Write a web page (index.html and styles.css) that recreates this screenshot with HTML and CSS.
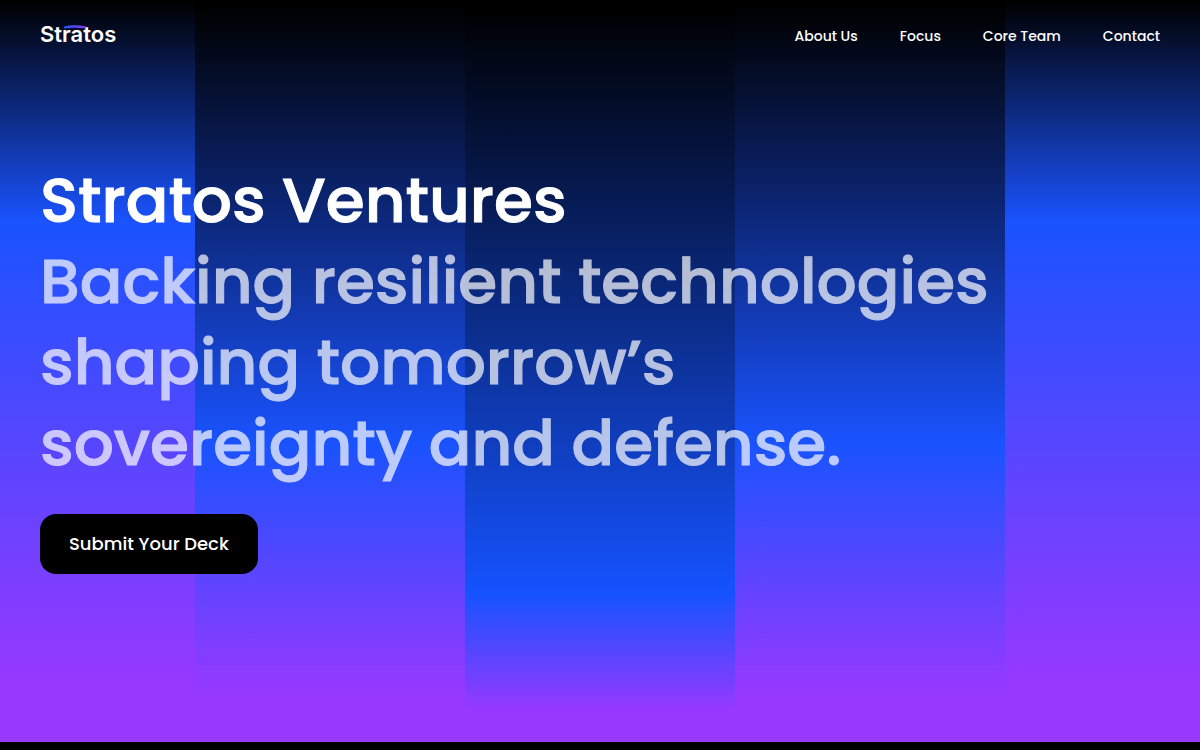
FILE: index.html
```html
<!DOCTYPE html>
<html lang="en">
<head>
<meta charset="utf-8">
<meta name="viewport" content="width=device-width, initial-scale=1">
<title>Stratos Ventures</title>
<link rel="stylesheet" href="styles.css">
</head>
<body>
<div class="hero">
  <div class="bands" aria-hidden="true">
    <div class="band band-outer"></div>
    <div class="band band-middle"></div>
    <div class="band band-center"></div>
    <div class="band band-middle"></div>
    <div class="band band-outer"></div>
  </div>
  <header class="header">
    <a class="logo" href="#">Stratos
      <svg class="logo-arc" viewBox="0 0 22 4" aria-hidden="true">
        <defs>
          <linearGradient id="arc" x1="0" x2="1">
            <stop offset="0" stop-color="#2355ff"/>
            <stop offset="1" stop-color="#8b37f5"/>
          </linearGradient>
        </defs>
        <path d="M0 1.4Q11 -1 22 1.4V3.6Q11 1.8 0 3.6Z" fill="url(#arc)"/>
      </svg>
    </a>
    <nav class="nav">
      <a href="#about">About Us</a>
      <a href="#focus">Focus</a>
      <a href="#team">Core Team</a>
      <a href="#contact">Contact</a>
    </nav>
  </header>
  <main class="content">
    <h1 class="title">Stratos Ventures<br><span class="tagline">Backing resilient technologies<br>shaping tomorrow’s<br>sovereignty and defense.</span></h1>
    <button class="submit" type="button">Submit Your Deck</button>
  </main>
</div>
</body>
</html>
```
FILE: styles.css
```css
* {
  box-sizing: border-box;
}

body {
  margin: 0;
  background: #000;
  color: #fff;
  font-family: Poppins, Inter, sans-serif;
}

.hero {
  position: relative;
  isolation: isolate;
  min-height: calc(100vh - 8px);
}

.bands {
  position: absolute;
  inset: 0;
  z-index: -1;
  display: grid;
  grid-template-columns: 195fr 270fr 270fr 270fr 195fr;
}

.band-outer {
  background: linear-gradient(#000, #1a53ff 30%, #9938ff 93%);
}

.band-middle {
  background: linear-gradient(#000 1%, #1a53ff 60%, #9938ff 94%);
}

.band-center {
  background: linear-gradient(#000 1%, #1553ff 80%, #9938ff 96%);
}

.header {
  display: flex;
  justify-content: space-between;
  align-items: center;
  height: 72px;
  padding: 0 40px;
}

.logo {
  position: relative;
  padding-bottom: 4px;
  color: #fff;
  font: 600 22px/24px Inter, "Liberation Sans", sans-serif;
  text-decoration: none;
}

.logo-arc {
  position: absolute;
  top: 3px;
  left: 24px;
  width: 22px;
  height: 4px;
}

.nav {
  display: flex;
  gap: 42px;
}

.nav a {
  color: #fff;
  font-size: 14px;
  font-weight: 500;
  line-height: 20px;
  text-decoration: none;
}

.content {
  display: flex;
  flex-direction: column;
  align-items: flex-start;
  gap: 30px;
  padding: 88px 40px 40px;
}

.title {
  margin: 0;
  font-size: 63px;
  font-weight: 500;
  line-height: 81px;
  -webkit-text-stroke: 1px currentColor;
}

.tagline {
  opacity: 0.7;
}

.submit {
  height: 60px;
  padding: 0 29px 2px;
  border: 0;
  border-radius: 16px;
  background: #000;
  color: #fff;
  font: inherit;
  font-size: 18px;
  font-weight: 500;
  cursor: pointer;
}
```
